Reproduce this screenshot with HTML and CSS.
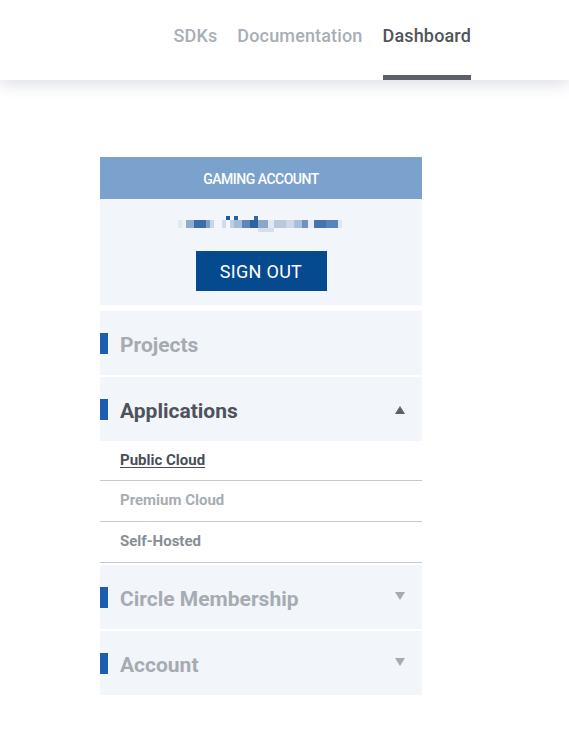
FILE: index.html
```html
<!DOCTYPE html>
<html lang="en">
<head>
<meta charset="utf-8">
<title>Dashboard</title>
<link rel="stylesheet" href="styles.css">
</head>
<body>
<header class="topbar">
  <nav class="nav">
    <a class="nav-item">SDKs</a>
    <a class="nav-item">Documentation</a>
    <a class="nav-item active">Dashboard</a>
  </nav>
</header>
<main class="content">
  <aside class="sidebar">
    <section class="account-card">
      <div class="account-title">GAMING ACCOUNT</div>
      <div class="account-body">
        <div class="email-blur" aria-label="hidden email"></div>
        <button class="sign-out">SIGN OUT</button>
      </div>
    </section>
    <div class="menu-item">
      <span class="marker"></span>
      <span class="menu-label">Projects</span>
    </div>
    <div class="menu-item open">
      <span class="marker"></span>
      <span class="menu-label">Applications</span>
      <span class="caret up"></span>
    </div>
    <ul class="submenu">
      <li class="sub-item current">Public Cloud</li>
      <li class="sub-item muted">Premium Cloud</li>
      <li class="sub-item">Self-Hosted</li>
    </ul>
    <div class="menu-item">
      <span class="marker"></span>
      <span class="menu-label">Circle Membership</span>
      <span class="caret down"></span>
    </div>
    <div class="menu-item">
      <span class="marker"></span>
      <span class="menu-label">Account</span>
      <span class="caret down"></span>
    </div>
  </aside>
</main>
</body>
</html>
```
FILE: styles.css
```css
* { box-sizing: border-box; }
html, body { margin: 0; padding: 0; background: #ffffff; }
body { font-family: Roboto, "Liberation Sans", sans-serif; }

.topbar {
  height: 80px;
  background: #fff;
  box-shadow: 0 5px 14px rgba(60, 70, 110, 0.16);
  display: flex;
  justify-content: flex-end;
  padding-right: 98px;
  position: relative;
}
.nav { display: flex; gap: 20px; height: 80px; }
.nav-item {
  display: flex;
  align-items: center;
  padding-bottom: 4px;
  font-size: 18px;
  font-weight: 500;
  letter-spacing: 0.15px;
  color: #a9aeb5;
  border-bottom: 5px solid transparent;
  cursor: pointer;
}
.nav-item.active { color: #50545b; border-bottom-color: #5b5f66; }

.content { padding: 77px 0 40px 100px; }
.sidebar { width: 322px; display: flex; flex-direction: column; }

.account-card { margin-bottom: 6px; }
.account-title {
  height: 42px;
  background: #7ba2cc;
  color: #fff;
  font-size: 14px;
  font-weight: 500;
  letter-spacing: -0.5px;
  display: flex;
  align-items: center;
  justify-content: center;
  padding-top: 1px;
}
.account-body {
  background: #f2f5f9;
  height: 106px;
  display: flex;
  flex-direction: column;
  align-items: center;
  padding-top: 17px;
}
.email-blur {
  width: 164px;
  height: 16px;
  margin-left: -2px;
  background:
    linear-gradient(90deg,
      transparent 0 48px, #1f5798 48px 52px, transparent 52px 56px,
      #2a5f9d 56px 60px, transparent 60px 76px, #3366a3 76px 80px, transparent 80px)
      0 0 / 164px 4px no-repeat,
    linear-gradient(90deg,
      transparent 0 80px, #d5dfeb 80px 96px, transparent 96px)
      0 12px / 164px 4px no-repeat,
    linear-gradient(90deg,
      #e3e9f1 0 4px, #eef2f7 4px 8px, #8fabcf 8px 16px, #3d6ca6 16px 28px,
      #7f9fc8 28px 32px, #c9d6e6 32px 36px, transparent 36px 44px,
      #d0dbe9 44px 48px, transparent 48px 52px, #c0cfe2 52px 56px,
      #a5bcd9 56px 64px, #5d86bb 64px 72px, #2f62a0 72px 80px,
      #8aa6cb 80px 90px, #e0e7f0 90px 96px, #b7c9df 96px 108px,
      #cdd9e8 108px 116px, #a9bed9 116px 124px, #6e92c0 124px 130px,
      #e8edf4 130px 136px, #4673ad 136px 148px, #5a82b6 148px 160px,
      #dfe6ef 160px 164px)
      0 4px / 164px 8px no-repeat;
}
.sign-out {
  margin-top: 19px;
  width: 131px;
  height: 40px;
  border: 0;
  background: #054a8f;
  color: #fff;
  font-family: Roboto, "Liberation Sans", sans-serif;
  font-size: 18px;
  font-weight: 400;
  letter-spacing: 0.3px;
  padding: 0;
  cursor: pointer;
}

.menu-item {
  height: 64px;
  background: #f2f5f9;
  display: flex;
  align-items: center;
  margin-bottom: 2px;
  padding-right: 17px;
  position: relative;
}
.menu-item.open { margin-bottom: 0; }
.marker {
  width: 8px;
  height: 21px;
  background: #1c5db0;
  margin-right: 12px;
  flex: none;
}
.menu-label {
  flex: 1;
  font-size: 21px;
  font-weight: 700;
  color: #a6abb3;
  padding-top: 4px;
}
.menu-item.open .menu-label { color: #4e535b; }
.caret {
  width: 0; height: 0;
  border-left: 5px solid transparent;
  border-right: 5px solid transparent;
}
.caret.up { border-bottom: 8px solid #5c6066; margin-top: 2px; }
.caret.down { border-top: 8px solid #a6abb3; margin-top: -2px; }

.submenu { list-style: none; margin: 0 0 2px; padding: 0; }
.sub-item {
  height: 40px;
  border-bottom: 1px solid #c6c8cb;
  padding-left: 20px;
  display: flex;
  align-items: center;
  font-size: 15px;
  font-weight: 700;
  color: #898e95;
  padding-bottom: 2px;
}
.sub-item + .sub-item { height: 41px; }
.sub-item.current { color: #4a4f57; text-decoration: underline; text-underline-offset: 2px; }
.sub-item.muted { color: #a8adb4; }
```
